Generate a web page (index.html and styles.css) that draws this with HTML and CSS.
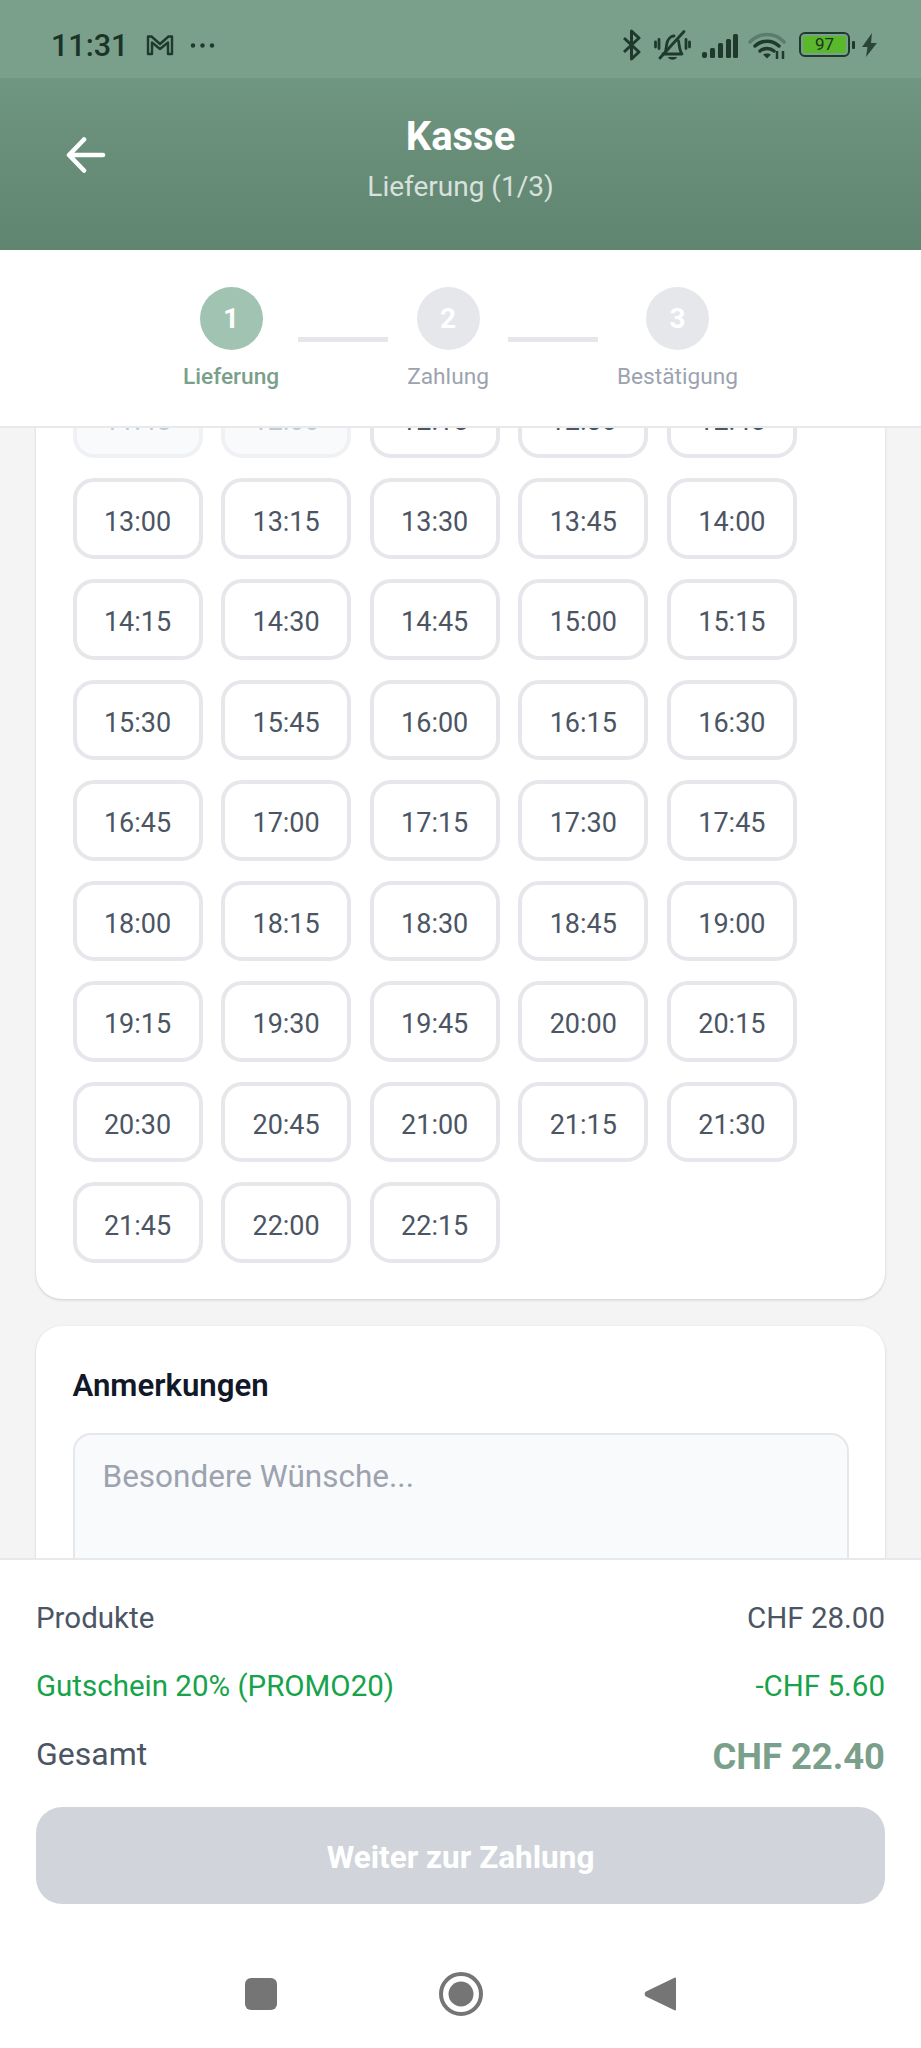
FILE: index.html
```html
<!DOCTYPE html>
<html lang="de">
<head>
<meta charset="utf-8">
<title>Kasse</title>
<link rel="stylesheet" href="styles.css">
</head>
<body>
<div class="app">
  <div class="statusbar">
    <div class="status-left">
      <span class="time">11:31</span>
      <svg class="ic-m" viewBox="0 0 28 22" width="28" height="22"><path d="M2 20V2.500h3.500L14 10l8.500-7.500H26V20h-4V8.500L14 15 6 8.500V20z" fill="none" stroke="#1f3a2c" stroke-width="2.400" stroke-linejoin="round"/></svg>
      <svg class="ic-dots" viewBox="0 0 25 5" width="25" height="5"><circle cx="3" cy="2.500" r="2.200"/><circle cx="12.500" cy="2.500" r="2.200"/><circle cx="22" cy="2.500" r="2.200"/></svg>
    </div>
    <div class="status-right">
      <svg class="ic-bt" viewBox="0 0 20 32" width="20" height="32"><path d="M2 9l15 14-7.500 7V2l7.500 7L2 23" fill="none" stroke="#1f3a2c" stroke-width="3" stroke-linejoin="round"/></svg>
      <svg class="ic-bell" viewBox="0 0 37 32" width="37" height="32"><g fill="none" stroke="#1f3a2c" stroke-width="2.800" stroke-linecap="round" stroke-linejoin="round"><path d="M10.500 24c2-3 1.500-8 2.500-11 1-4 4-7 7-7M24.500 11c1 4 .5 9 3.500 13H9"/><path d="M6 28L30 1.500"/><path d="M1.500 12v5M5 9.500v9M32 9.500v9M35.500 12v5"/></g><path d="M14 27h9c-1 3.500-8 3.500-9 0z" fill="#1f3a2c"/></svg>
      <svg class="ic-signal" viewBox="0 0 36 24" width="36" height="24"><g fill="#1f3a2c"><rect x="0" y="18" width="5" height="6" rx="2"/><rect x="8" y="14" width="5" height="10" rx="1.500"/><rect x="16" y="9" width="5" height="15" rx="1.500"/><rect x="24" y="5" width="5" height="19" rx="1.500"/><rect x="31" y="0" width="5" height="24" rx="1.500"/></g></svg>
      <svg class="ic-wifi" viewBox="0 0 38 28" width="38" height="28"><g fill="none" stroke-linecap="round"><path d="M2 10C11 0 27 0 36 10" stroke="#5b7d6a" stroke-width="3.500"/><path d="M7 14c7-6.500 17-6.500 24 0" stroke="#1f3a2c" stroke-width="3.500"/><path d="M12 19c4-3.500 10-3.500 14 0" stroke="#1f3a2c" stroke-width="3.500"/></g><path d="M15 22.500c2-1.500 6-1.500 8 0l-4 4z" fill="#1f3a2c"/><path d="M29 19v8M35 19v8" stroke="#1f3a2c" stroke-width="2.500"/></svg>
      <div class="battery"><div class="battery-body"><span class="battery-fill">97</span></div><div class="battery-nub"></div></div>
      <svg class="ic-bolt" viewBox="0 0 15 24" width="15" height="24"><path d="M10 0L0 14h5.500L4 24l11-14H9z" fill="#2b4637"/></svg>
    </div>
  </div>

  <header class="topbar">
    <div class="back">
      <svg viewBox="0 0 40 36" width="40" height="36"><path d="M37 18H4M18 2.500L3 18l15 15.500" fill="none" stroke="#fff" stroke-width="4.600" stroke-linecap="round" stroke-linejoin="round"/></svg>
    </div>
    <div class="titles">
      <div class="title">Kasse</div>
      <div class="subtitle">Lieferung (1/3)</div>
    </div>
    <div></div>
  </header>

  <nav class="stepper">
    <div class="step active"><div class="dot">1</div><div class="label">Lieferung</div></div>
    <div class="line"></div>
    <div class="step"><div class="dot">2</div><div class="label">Zahlung</div></div>
    <div class="line"></div>
    <div class="step"><div class="dot">3</div><div class="label">Bestätigung</div></div>
  </nav>

  <main class="scroll">
    <section class="card times">
      <div class="grid">
        <div class="slot off">11:45</div><div class="slot off">12:00</div><div class="slot">12:15</div><div class="slot">12:30</div><div class="slot">12:45</div>
        <div class="slot">13:00</div><div class="slot">13:15</div><div class="slot">13:30</div><div class="slot">13:45</div><div class="slot">14:00</div>
        <div class="slot">14:15</div><div class="slot">14:30</div><div class="slot">14:45</div><div class="slot">15:00</div><div class="slot">15:15</div>
        <div class="slot">15:30</div><div class="slot">15:45</div><div class="slot">16:00</div><div class="slot">16:15</div><div class="slot">16:30</div>
        <div class="slot">16:45</div><div class="slot">17:00</div><div class="slot">17:15</div><div class="slot">17:30</div><div class="slot">17:45</div>
        <div class="slot">18:00</div><div class="slot">18:15</div><div class="slot">18:30</div><div class="slot">18:45</div><div class="slot">19:00</div>
        <div class="slot">19:15</div><div class="slot">19:30</div><div class="slot">19:45</div><div class="slot">20:00</div><div class="slot">20:15</div>
        <div class="slot">20:30</div><div class="slot">20:45</div><div class="slot">21:00</div><div class="slot">21:15</div><div class="slot">21:30</div>
        <div class="slot">21:45</div><div class="slot">22:00</div><div class="slot">22:15</div>
      </div>
    </section>
    <section class="card notes">
      <h2 class="notes-title">Anmerkungen</h2>
      <div class="notes-input">Besondere Wünsche...</div>
    </section>
  </main>

  <footer class="summary">
    <div class="row"><span>Produkte</span><span>CHF 28.00</span></div>
    <div class="row promo"><span>Gutschein 20% (PROMO20)</span><span>-CHF 5.60</span></div>
    <div class="row total"><span>Gesamt</span><span class="total-value">CHF 22.40</span></div>
    <div class="cta">Weiter zur Zahlung</div>
    <div class="navbar">
      <svg viewBox="0 0 44 44" width="44" height="44"><rect x="6" y="6" width="32" height="32" rx="6" fill="#757575"/></svg>
      <svg viewBox="0 0 44 44" width="44" height="44"><circle cx="22" cy="22" r="20" fill="none" stroke="#757575" stroke-width="4"/><circle cx="22" cy="22" r="12.500" fill="#757575"/></svg>
      <svg viewBox="0 0 44 44" width="44" height="44"><path d="M36 5.500a1 1 0 0 1 1 1v31a1 1 0 0 1-1 1a2 2 0 0 1-1-.4L7 24.500a3 3 0 0 1 0-5L35 6a2 2 0 0 1 1-.5z" fill="#757575"/></svg>
    </div>
  </footer>
</div>
</body>
</html>
```
FILE: styles.css
```css
* { box-sizing: border-box; }
html, body { margin: 0; padding: 0; }
body { font-family: Roboto, "Liberation Sans", sans-serif; background: #f4f4f4; color: #4b5563; }
.app { width: 921px; height: 2048px; display: flex; flex-direction: column; overflow: hidden; }

.statusbar { height: 78px; flex: none; background: #7aa08b; display: flex; justify-content: space-between; padding: 29px 44px 0 51px; }
.status-left { display: flex; align-items: flex-start; }
.time { font-size: 30.500px; line-height: 34px; font-weight: 500; color: #1c3327; }
.ic-m { margin: 5px 0 0 18px; }
.ic-dots { margin: 14px 0 0 16px; fill: #1f3a2c; }
.status-right { display: flex; align-items: flex-start; }
.ic-bt { margin-top: 0; }
.ic-bell { margin: 1px 0 0 12px; }
.ic-signal { margin: 5px 0 0 11px; }
.ic-wifi { margin: 3px 0 0 10px; }
.battery { display: flex; align-items: center; margin: 3px 0 0 13px; }
.battery-body { width: 51px; height: 25px; border: 2.500px solid #1f3a2c; border-radius: 6px; padding: 2px; display: flex; }
.battery-fill { flex: 1; background: #5ab82c; border-radius: 2px; font-size: 17px; line-height: 16px; text-align: center; color: #1c3327; }
.battery-nub { width: 3px; height: 8px; background: #1f3a2c; margin-left: 2px; border-radius: 1px; }
.ic-bolt { margin: 4px 0 0 7px; }

.topbar { height: 172px; flex: none; background: linear-gradient(#6f9680, #5f846f); display: grid; grid-template-columns: 1fr auto 1fr; }
.back { padding: 59px 0 0 66px; }
.back svg { display: block; }
.titles { text-align: center; padding-top: 36px; }
.title { font-size: 40px; line-height: 46px; font-weight: 700; color: #fff; }
.subtitle { font-size: 28px; line-height: 34px; margin-top: 10px; color: rgba(255, 255, 255, .75); }

.stepper { height: 178px; flex: none; background: #fff; border-bottom: 2px solid #e8e9eb; display: flex; justify-content: center; align-items: flex-start; padding-top: 37px; }
.step { display: flex; flex-direction: column; align-items: center; }
.dot { width: 63px; height: 63px; border-radius: 50%; background: #e5e7eb; color: #fff; font-size: 28px; font-weight: 700; line-height: 63px; text-align: center; }
.step.active .dot { background: #a1c3b2; }
.label { font-size: 22.700px; line-height: 28px; margin-top: 13px; color: #9ca3af; }
.step.active .label { color: #7a9f8a; font-weight: 500; }
.line { width: 90px; height: 5px; background: #e5e7eb; margin: 50px 19px 0; }

.scroll { flex: 1; min-height: 0; overflow: hidden; padding: 0 36px; }
.card { background: #fff; border-radius: 26px; box-shadow: 0 1px 3px rgba(0, 0, 0, .16); }
.times { margin-top: -50.2px; padding: 0 36.500px 36.600px; }
.grid { display: grid; grid-template-columns: repeat(5, 130px); column-gap: 18.600px; row-gap: 20px; grid-auto-rows: 80.57px; }
.slot { border: 4px solid #e5e7eb; border-radius: 21px; padding-top: 6px; display: flex; align-items: center; justify-content: center; font-size: 27px; color: #4b5563; background: #fff; }
.slot.off { background: #f9fafb; border-color: #f0f1f4; color: #c4c8cf; }
.notes { margin-top: 27px; padding: 40px 36.500px 60px; }
.notes-title { margin: 0; font-size: 31.200px; line-height: 40px; font-weight: 600; color: #111827; }
.notes-input { margin-top: 27px; height: 190px; background: #f9fafb; border: 2px solid #e5e7eb; border-radius: 18px; padding: 21px 28px; font-size: 31.500px; line-height: 42px; color: #9ca3af; }

.summary { height: 490px; flex: none; background: #fff; border-top: 2px solid #e8e9eb; padding: 38px 36px 0; position: relative; }
.row { display: flex; justify-content: space-between; align-items: flex-start; font-size: 29.500px; line-height: 40px; }
.promo { margin-top: 28px; color: #16a34a; }
.total { margin-top: 28px; font-size: 32px; }
.total-value { font-size: 36.400px; line-height: 46px; font-weight: 700; color: #7a9f8a; }
.cta { margin-top: 27px; height: 97px; padding-top: 3px; border-radius: 26px; background: #d1d5db; color: #fff; font-size: 31.500px; font-weight: 700; display: flex; align-items: center; justify-content: center; }
.navbar { display: flex; justify-content: center; gap: 156px; padding-top: 68px; }
.navbar svg { display: block; }
```
